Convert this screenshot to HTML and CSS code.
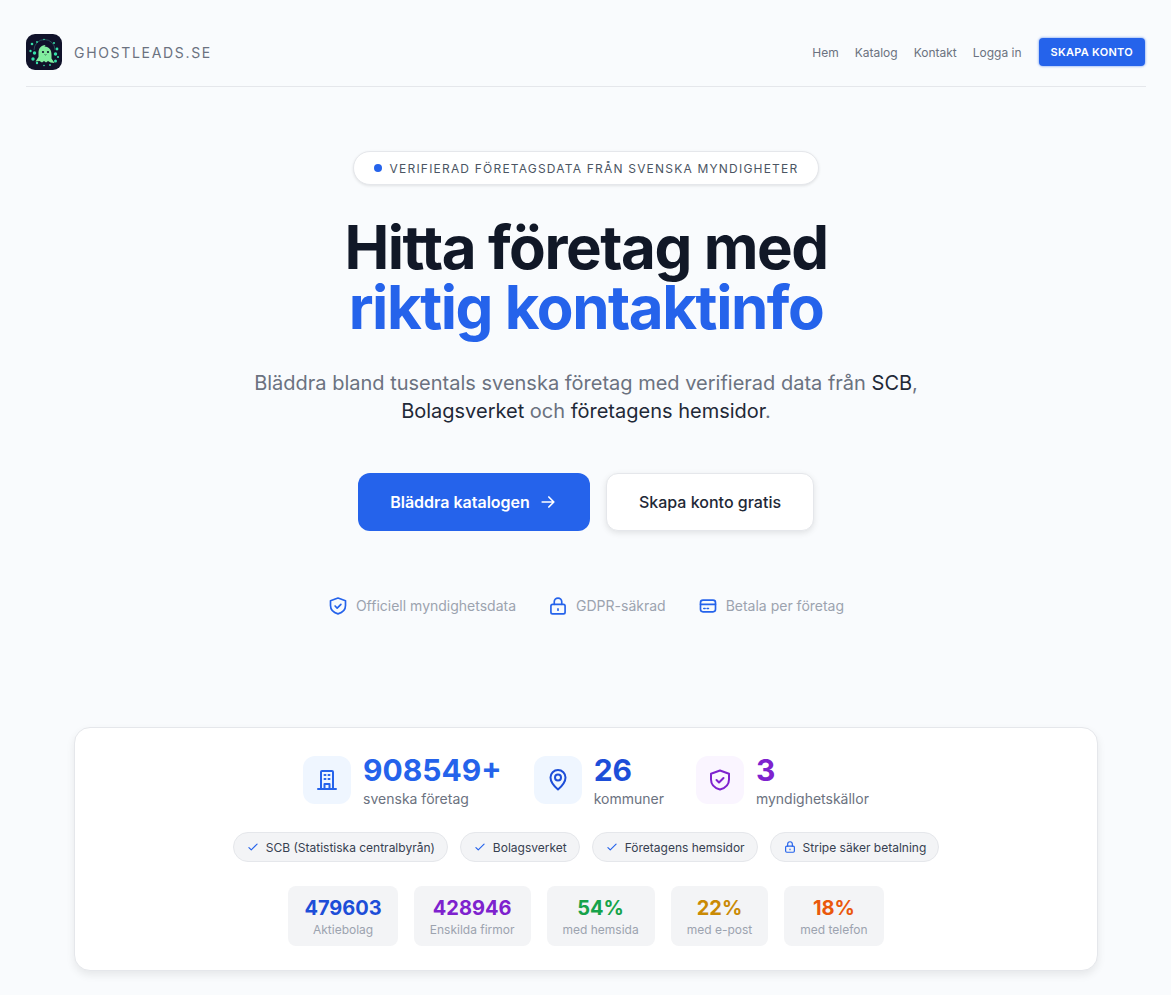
FILE: index.html
```html
<!DOCTYPE html>
<html lang="sv">
  <head>
    <meta charset="UTF-8" />
    <title>Ghostleads.se</title>
    <meta name="viewport" content="width=device-width, initial-scale=1.0" />
    <link rel="stylesheet" href="styles.css">
  </head>
  <body>
    <header class="site-header">
      <a href="#" class="brand">
        <svg class="brand-logo" viewBox="0 0 36 36" aria-hidden="true">
          <rect width="36" height="36" rx="9" fill="#10122a" />
          <path d="M8 16a10.500 10.500 0 0 1 21 0" fill="none" stroke="#2f6a6a" stroke-width="0.7" />
          <g fill="#35e0a8">
            <circle cx="6" cy="10" r="1.300" /><circle cx="11" cy="8" r="0.900" /><circle cx="4.500" cy="17" r="1.200" />
            <circle cx="8.500" cy="19" r="1.700" /><circle cx="7" cy="25" r="1.700" /><circle cx="11" cy="29" r="1.200" />
            <circle cx="28" cy="9" r="1" /><circle cx="31" cy="15" r="1.400" /><circle cx="29.500" cy="20" r="1.700" />
            <circle cx="32" cy="23" r="1.100" /><circle cx="29.500" cy="27" r="1.500" /><circle cx="24" cy="31" r="0.900" />
            <circle cx="18" cy="5.500" r="0.800" /><circle cx="18" cy="31.500" r="0.800" />
          </g>
          <path d="M19.500 11c-4.800 0-7 3.700-7 8v4l-3 4.500 4-.500 2.500 1.500 2-1.500 2 1.500 2-1.500 2.500 1.500 4 .500-3-4.500v-4c0-4.300-2.200-8-7-8z" fill="#82ee9f" />
          <circle cx="17" cy="18" r="1.100" fill="#10122a" /><circle cx="22" cy="18" r="1.100" fill="#10122a" />
          <path d="M18.500 20.500q1 1 2 0" fill="none" stroke="#10122a" stroke-width="0.600" />
        </svg>
        <span class="brand-name">GHOSTLEADS.SE</span>
      </a>
      <nav class="main-nav">
        <a href="#">Hem</a>
        <a href="#">Katalog</a>
        <a href="#">Kontakt</a>
        <a href="#">Logga in</a>
        <a href="#" class="nav-cta">SKAPA KONTO</a>
      </nav>
    </header>

    <main>
      <section class="hero">
        <div class="pill"><span class="pill-dot"></span>VERIFIERAD FÖRETAGSDATA FRÅN SVENSKA MYNDIGHETER</div>
        <h1>Hitta företag med<br /><span class="accent">riktig kontaktinfo</span></h1>
        <p class="lead">
          Bläddra bland tusentals svenska företag med verifierad data från <b>SCB</b>,
          <b>Bolagsverket</b> och <b>företagens hemsidor</b>.
        </p>
        <div class="hero-actions">
          <a href="#" class="btn btn-primary">
            Bläddra katalogen
            <svg class="icon-arrow" viewBox="0 0 24 24" fill="none" stroke="currentColor" stroke-width="2" stroke-linecap="round" stroke-linejoin="round"><path d="M5 12h14M13 6l6 6-6 6" /></svg>
          </a>
          <a href="#" class="btn btn-secondary">Skapa konto gratis</a>
        </div>
        <ul class="trust">
          <li>
            <svg viewBox="0 0 24 24"><path d="M8.500 12l2.500 2.500 4.500-4.500M12 2.500l9 3.200v5.800c0 5-3.500 8.500-9 10-5.500-1.500-9-5-9-10V5.700l9-3.200z" /></svg>
            Officiell myndighetsdata
          </li>
          <li>
            <svg viewBox="0 0 24 24"><rect x="3.500" y="10" width="17" height="11.500" rx="2" /><path d="M7.500 10V7a4.500 4.500 0 0 1 9 0v3M12 15.500v1.500" /></svg>
            GDPR-säkrad
          </li>
          <li>
            <svg viewBox="0 0 24 24"><rect x="3" y="5" width="18" height="14" rx="3" /><path d="M3 10h18M7 15h1.500M11 15h1.500" /></svg>
            Betala per företag
          </li>
        </ul>
      </section>

      <section class="stats-card">
        <div class="stats-main">
          <div class="stat">
            <div class="stat-icon tint-blue">
              <svg viewBox="0 0 24 24"><path d="M3 21h18M6 21V4a1 1 0 0 1 1-1h10a1 1 0 0 1 1 1v17M9.500 21v-5h5v5M9.500 7h1M13.500 7h1M9.500 11h1M13.500 11h1" /></svg>
            </div>
            <div>
              <div class="stat-num c-blue">908549+</div>
              <div class="stat-label">svenska företag</div>
            </div>
          </div>
          <div class="stat">
            <div class="stat-icon tint-blue">
              <svg viewBox="0 0 24 24" class="c-deep"><path d="M12 21.500s-7.500-6.500-7.500-12a7.500 7.500 0 0 1 15 0c0 5.500-7.500 12-7.500 12z" /><circle cx="12" cy="9.500" r="3" /></svg>
            </div>
            <div>
              <div class="stat-num c-deep">26</div>
              <div class="stat-label">kommuner</div>
            </div>
          </div>
          <div class="stat">
            <div class="stat-icon tint-purple">
              <svg viewBox="0 0 24 24" class="c-purple"><path d="M8.500 12l2.500 2.500 4.500-4.500M12 2.500l9 3.200v5.800c0 5-3.500 8.500-9 10-5.500-1.500-9-5-9-10V5.700l9-3.200z" /></svg>
            </div>
            <div>
              <div class="stat-num c-purple">3</div>
              <div class="stat-label">myndighetskällor</div>
            </div>
          </div>
        </div>

        <div class="sources">
          <span class="source"><svg viewBox="0 0 24 24"><path d="M5 13l4 4L19 7" /></svg>SCB (Statistiska centralbyrån)</span>
          <span class="source"><svg viewBox="0 0 24 24"><path d="M5 13l4 4L19 7" /></svg>Bolagsverket</span>
          <span class="source"><svg viewBox="0 0 24 24"><path d="M5 13l4 4L19 7" /></svg>Företagens hemsidor</span>
          <span class="source"><svg viewBox="0 0 24 24"><rect x="4.500" y="10.500" width="15" height="10.500" rx="2" /><path d="M8 10.500V7a4 4 0 0 1 8 0v3.500M12 15.500v1" /></svg>Stripe säker betalning</span>
        </div>

        <div class="mini-stats">
          <div class="mini"><div class="mini-num c-deep">479603</div><div class="mini-label">Aktiebolag</div></div>
          <div class="mini"><div class="mini-num c-purple">428946</div><div class="mini-label">Enskilda firmor</div></div>
          <div class="mini"><div class="mini-num c-green">54%</div><div class="mini-label">med hemsida</div></div>
          <div class="mini"><div class="mini-num c-yellow">22%</div><div class="mini-label">med e-post</div></div>
          <div class="mini"><div class="mini-num c-orange">18%</div><div class="mini-label">med telefon</div></div>
        </div>
      </section>
    </main>
  </body>
</html>
```

FILE: styles.css
```css
/* --- Reset & base --- */
*, *::before, *::after {
  box-sizing: border-box;
  margin: 0;
  padding: 0;
}
body {
  font-family: Inter, "Liberation Sans", sans-serif;
  color: #111827;
  background: #f9fbfd;
  padding: 0 25px 0 26px;
  height: 995px;
  overflow: hidden;
}
a {
  text-decoration: none;
  color: inherit;
}

/* --- Header --- */
.site-header {
  display: flex;
  align-items: center;
  justify-content: space-between;
  height: 87px;
  padding-top: 18px;
  border-bottom: 1px solid #e5e7eb;
}
.brand {
  display: flex;
  align-items: center;
  gap: 12px;
}
.brand-logo {
  width: 36px;
  height: 36px;
  display: block;
}
.brand-name {
  font-size: 14px;
  letter-spacing: 0.12em;
  color: #6b7280;
}
.main-nav {
  display: flex;
  align-items: center;
  gap: 16px;
  font-size: 12px;
  color: #6b7280;
}
.nav-cta {
  margin-left: 1px;
  margin-right: 1px;
  padding: 0 12px;
  height: 28px;
  line-height: 28px;
  border-radius: 4px;
  background: #2563eb;
  color: #fff;
  font-size: 11px;
  font-weight: 600;
  letter-spacing: 0.025em;
  box-shadow: 0 0 2px 1px rgba(37, 99, 235, 0.35);
}

/* --- Hero --- */
.hero {
  display: flex;
  flex-direction: column;
  align-items: center;
  text-align: center;
  padding-top: 64px;
}
.pill {
  display: flex;
  align-items: center;
  gap: 8px;
  height: 34px;
  padding: 0 20px;
  border: 1px solid #e5e7eb;
  border-radius: 17px;
  background: #fff;
  font-size: 12px;
  letter-spacing: 0.1em;
  color: #4b5563;
  box-shadow: 0 1px 3px rgba(0, 0, 0, 0.1);
}
.pill-dot {
  width: 8px;
  height: 8px;
  border-radius: 50%;
  background: #2563eb;
}
h1 {
  margin-top: 32px;
  font-size: 60px;
  line-height: 60px;
  font-weight: 700;
  letter-spacing: -1.45px;
  color: #111827;
}
.accent {
  color: #2563eb;
}
.lead {
  margin-top: 32px;
  width: 672px;
  font-size: 20px;
  line-height: 28px;
  color: #6b7280;
}
.lead b {
  font-weight: 400;
  color: #1f2937;
}
.hero-actions {
  display: flex;
  gap: 16px;
  margin-top: 48px;
}
.btn {
  display: flex;
  align-items: center;
  justify-content: center;
  gap: 8px;
  height: 58px;
  border-radius: 12px;
  font-size: 16px;
  font-weight: 600;
}
.btn-primary {
  width: 232px;
  background: #2563eb;
  color: #fff;
}
.icon-arrow {
  width: 20px;
  height: 20px;
}
.btn-secondary {
  width: 208px;
  background: #fff;
  color: #1f2937;
  font-weight: 500;
  border: 1px solid #e5e7eb;
  box-shadow: 0 2px 6px rgba(0, 0, 0, 0.1);
}
.trust {
  display: flex;
  gap: 32px;
  list-style: none;
  margin-top: 65px;
  font-size: 14px;
  line-height: 20px;
  color: #9ca3af;
}
.trust li {
  display: flex;
  align-items: center;
  gap: 8px;
}
.trust svg {
  width: 20px;
  height: 20px;
  fill: none;
  stroke: #2563eb;
  stroke-width: 2;
  stroke-linecap: round;
  stroke-linejoin: round;
}

/* --- Stats card --- */
.stats-card {
  width: 1024px;
  height: 244px;
  margin: 111px auto 0;
  padding-top: 28px;
  background: #fff;
  border: 1px solid #e5e7eb;
  border-radius: 16px;
  box-shadow: 0 4px 8px rgba(0, 0, 0, 0.08);
}
.stats-main {
  display: flex;
  justify-content: center;
  gap: 32px;
}
.stat {
  display: flex;
  align-items: flex-start;
  gap: 12px;
}
.stat-icon {
  display: flex;
  align-items: center;
  justify-content: center;
  width: 48px;
  height: 48px;
  border-radius: 12px;
}
.stat-icon svg {
  width: 24px;
  height: 24px;
  fill: none;
  stroke: currentColor;
  stroke-width: 2;
  stroke-linecap: round;
  stroke-linejoin: round;
  color: #2563eb;
}
.stat-icon svg.c-deep { color: #1d4ed8; }
.stat-icon svg.c-purple { color: #7e22ce; }
.tint-blue { background: #eff6ff; }
.tint-purple { background: #faf5ff; }
.stat-num {
  font-size: 30px;
  line-height: 28px;
  font-weight: 700;
}
.stat-label {
  margin-top: 5px;
  font-size: 14px;
  line-height: 20px;
  color: #6b7280;
}
.c-blue { color: #2563eb; }
.c-deep { color: #1d4ed8; }
.c-purple { color: #7e22ce; }
.c-green { color: #16a34a; }
.c-yellow { color: #ca8a04; }
.c-orange { color: #ea580c; }

.sources {
  display: flex;
  justify-content: center;
  gap: 12px;
  margin-top: 23px;
}
.source {
  display: flex;
  align-items: center;
  gap: 6px;
  height: 30px;
  padding: 0 12px;
  border: 1px solid #e5e7eb;
  border-radius: 15px;
  background: #f3f4f6;
  font-size: 12px;
  color: #374151;
}
.source svg {
  width: 14px;
  height: 14px;
  fill: none;
  stroke: #2563eb;
  stroke-width: 2;
  stroke-linecap: round;
  stroke-linejoin: round;
}

.mini-stats {
  display: flex;
  justify-content: center;
  gap: 16px;
  margin-top: 24px;
}
.mini {
  padding: 8px 16px;
  height: 60px;
  border-radius: 8px;
  background: #f3f4f6;
  text-align: center;
}
.mini-num {
  font-size: 20px;
  line-height: 28px;
  font-weight: 700;
}
.mini-label {
  font-size: 12px;
  line-height: 16px;
  color: #9ca3af;
}
```
